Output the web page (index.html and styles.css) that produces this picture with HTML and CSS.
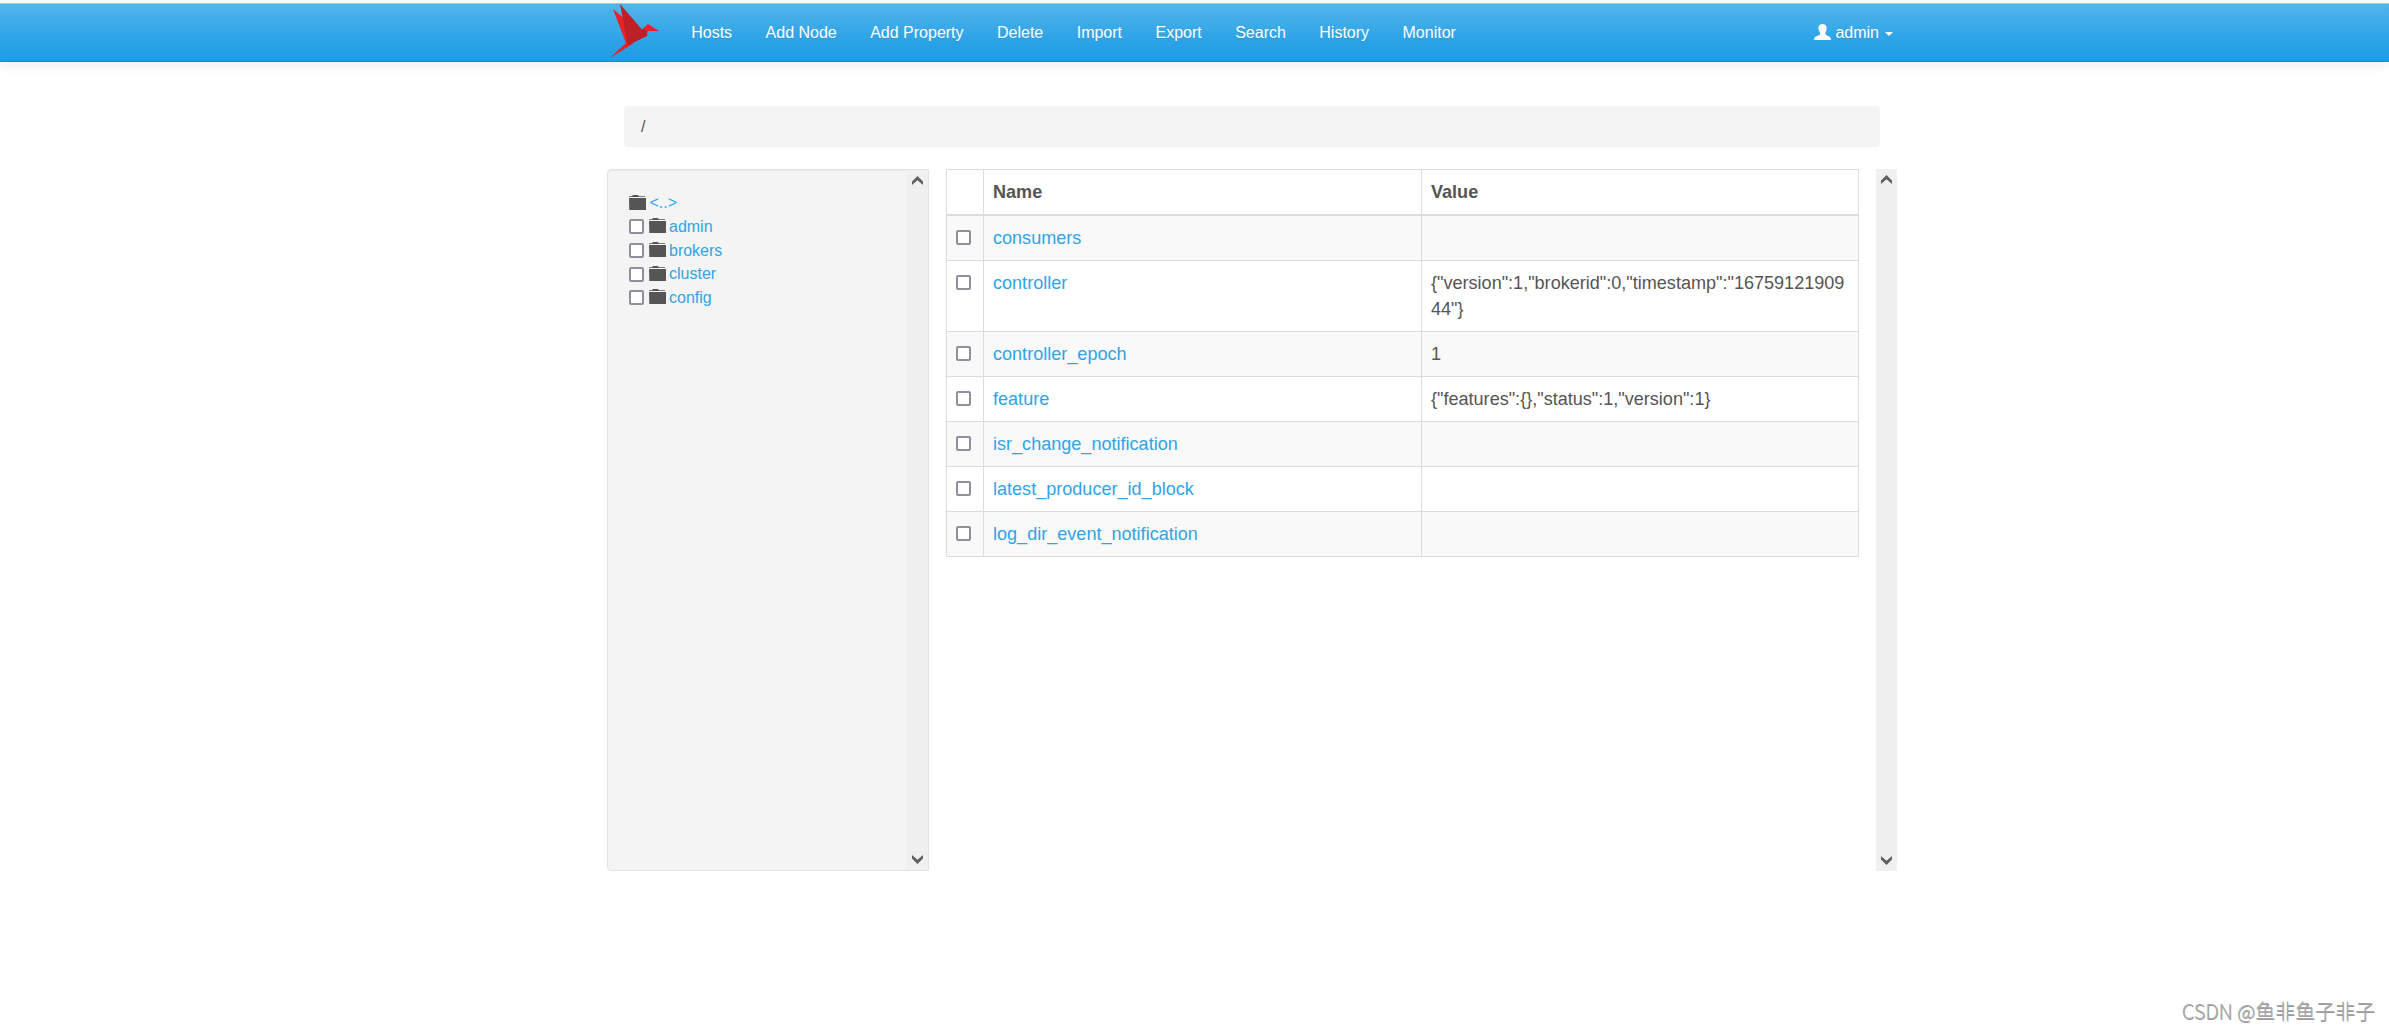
FILE: index.html
```
<!DOCTYPE html>
<html lang="en">
<head>
  <meta charset="UTF-8" />
  <title>Zookeeper UI</title>
  <link rel="stylesheet" href="styles.css">
</head>
<body>

  <!-- shared icons -->
  <svg class="sprite" width="0" height="0">
    <symbol id="folder" viewBox="0 0 17 15"><path d="M0 1.3h3L3.9 0h5L9.9 1.3H16V2H0zM0 3h17v12H.3z"/></symbol>
    <symbol id="up" viewBox="0 0 11 9"><path d="M5.5 0L11 5.6V9L5.5 4.2L0 9V5.6z"/></symbol>
    <symbol id="down" viewBox="0 0 11 9"><path d="M5.5 9L11 3.4V0L5.5 4.8L0 0V3.4z"/></symbol>
  </svg>

  <header class="navbar">
    <div class="nav-inner">
      <a class="logo" href="#">
        <svg width="50" height="56" viewBox="0 0 50 56">
          <path fill="#ed2024" d="M3 5L12.5 13L18 38L24 39L0 54L16 39z"/>
          <path fill="#bd2026" d="M10 0L32 25.5L35 23L37.5 27L37 32L17.5 41.5L12.5 13z"/>
          <path fill="#ed2024" d="M33 25L38 20L49 27L37.5 27z"/>
        </svg>
      </a>
      <nav class="nav">
        <a href="#">Hosts</a>
        <a href="#">Add Node</a>
        <a href="#">Add Property</a>
        <a href="#">Delete</a>
        <a href="#">Import</a>
        <a href="#">Export</a>
        <a href="#">Search</a>
        <a href="#">History</a>
        <a href="#">Monitor</a>
      </nav>
      <a class="user" href="#">
        <svg class="user-icon" width="17" height="16" viewBox="0 0 17 16"><path d="M5 1.5Q6 0 8.5 0T12 1.5Q13 3 12.5 6L11.5 8.5V10.5L16 13Q17 13.8 17 16H0Q0 13.8 1 13L6 10.5V8.5L4.7 6Q4 3 5 1.5z"/></svg>
        <span>admin</span>
        <b class="caret"></b>
      </a>
    </div>
  </header>

  <div class="breadcrumb">/</div>

  <main class="content">
    <div class="tree">
      <ul>
        <li><svg class="folder"><use href="#folder"/></svg><a href="#">&lt;..&gt;</a></li>
        <li><input type="checkbox"><svg class="folder"><use href="#folder"/></svg><a href="#">admin</a></li>
        <li><input type="checkbox"><svg class="folder"><use href="#folder"/></svg><a href="#">brokers</a></li>
        <li><input type="checkbox"><svg class="folder"><use href="#folder"/></svg><a href="#">cluster</a></li>
        <li><input type="checkbox"><svg class="folder"><use href="#folder"/></svg><a href="#">config</a></li>
      </ul>
      <div class="scroll">
        <svg><use href="#up"/></svg>
        <svg><use href="#down"/></svg>
      </div>
    </div>

    <div class="props">
      <table>
        <thead>
          <tr><th class="check"></th><th class="name">Name</th><th>Value</th></tr>
        </thead>
        <tbody>
          <tr><td><input type="checkbox"></td><td><a href="#">consumers</a></td><td></td></tr>
          <tr><td><input type="checkbox"></td><td><a href="#">controller</a></td><td>{"version":1,"brokerid":0,"timestamp":"1675912190944"}</td></tr>
          <tr><td><input type="checkbox"></td><td><a href="#">controller_epoch</a></td><td>1</td></tr>
          <tr><td><input type="checkbox"></td><td><a href="#">feature</a></td><td>{"features":{},"status":1,"version":1}</td></tr>
          <tr><td><input type="checkbox"></td><td><a href="#">isr_change_notification</a></td><td></td></tr>
          <tr><td><input type="checkbox"></td><td><a href="#">latest_producer_id_block</a></td><td></td></tr>
          <tr><td><input type="checkbox"></td><td><a href="#">log_dir_event_notification</a></td><td></td></tr>
        </tbody>
      </table>
    </div>

    <div class="scroll">
      <svg><use href="#up"/></svg>
      <svg><use href="#down"/></svg>
    </div>
  </main>

  <div class="watermark"><span>CSDN @</span>鱼非鱼子非子</div>

</body>
</html>
```

FILE: styles.css
```
* { box-sizing: border-box; }
body {
  margin: 0;
  height: 1030px;
  overflow: hidden;
  font-family: "Liberation Sans", Arial, sans-serif;
  font-size: 16px;
  color: #555;
  background: #fff;
}
a { color: #2fa4e7; text-decoration: none; }
.sprite { position: absolute; }

.navbar {
  height: 62px;
  border-top: 3px solid #f9f9fb;
  border-bottom: 1px solid #178acc;
  background: linear-gradient(#54b4eb, #2fa4e7 60%, #1d9ce5);
  box-shadow: inset 0 1px 0 #bcc0c2, 0 1px 13px rgba(0,0,0,0.1);
}
.nav-inner {
  width: 1290px;
  height: 58px;
  margin-left: 607px;
  display: flex;
  border-top: 1px solid transparent;
}
.logo { width: 67.5px; padding-left: 3px; }
.logo svg { display: block; }
.nav { display: flex; }
.nav a, .user {
  padding: 0 16.72px;
  line-height: 57px;
  color: #fff;
  text-shadow: 0 1px 0 rgba(0,0,0,0.1);
}
.user { display: flex; align-items: center; margin-left: auto; padding: 0 4px 0 0; }
.user-icon { fill: #fff; margin: -2px 4px 0 0; }
.caret {
  margin: 3px 0 0 6px;
  border-top: 4px solid #fff;
  border-left: 4px solid transparent;
  border-right: 4px solid transparent;
}

.breadcrumb {
  width: 1256px;
  height: 41px;
  margin: 44px 0 22px 624px;
  padding-left: 17px;
  line-height: 41px;
  background: #f4f4f4;
  border-radius: 4px;
}

.content { display: flex; width: 1290px; height: 702px; margin-left: 607px; }
.tree {
  width: 322px;
  display: flex;
  justify-content: space-between;
  background: #f4f4f4;
  border: 1px solid #e3e3e3;
  border-radius: 4px 0 0 4px;
  box-shadow: inset 0 1px 1px rgba(0,0,0,0.05);
}
.tree ul { list-style: none; margin: 0; padding: 21.4px 21px; }
.tree li { display: flex; align-items: center; height: 23.7px; }
.folder { width: 17px; height: 15px; fill: #555; margin: -2px 3.4px 0 0; }

input[type="checkbox"] {
  appearance: none;
  width: 15px;
  height: 15px;
  margin: 0;
  border: 2px solid #8f8f9d;
  border-radius: 2px;
  background: #fff;
}
.tree input[type="checkbox"] { margin-right: 4.6px; }
td input[type="checkbox"] { display: block; margin: 5px 0 0 0.4px; }

.scroll {
  width: 21px;
  padding: 6px 5px;
  display: flex;
  flex-direction: column;
  justify-content: space-between;
  background: #f0f0f0;
}
.scroll svg { width: 11px; height: 9px; fill: #606060; }

.props { width: 913px; margin: 0 17px; }
table {
  width: 100%;
  table-layout: fixed;
  border-collapse: collapse;
  font-size: 18.07px;
  line-height: 26px;
}
th, td {
  padding: 9px;
  height: 45px;
  border: 1px solid #ddd;
  text-align: left;
  vertical-align: top;
  word-break: break-all;
}
th { border-bottom-width: 2px; }
.check { width: 37px; }
.name { width: 438px; }
tbody tr:nth-child(odd) { background: #f9f9f9; }

.watermark {
  position: absolute;
  right: 14px;
  bottom: 5px;
  font-family: "Liberation Sans", "Noto Sans CJK SC", sans-serif;
  font-size: 20px;
  font-weight: 300;
  color: #aaa;
  text-shadow: 0.5px 0.5px 0 #999;
}
.watermark span { font-family: "Noto Sans CJK SC", sans-serif; letter-spacing: -0.1px; }
```
